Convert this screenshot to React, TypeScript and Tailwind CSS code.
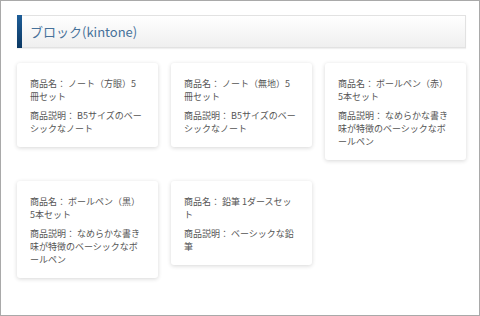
import React from 'react';

interface Product {
  name: string;
  description: string;
}

const PRODUCTS: Product[] = [
  { name: 'ノート（方眼）5冊セット', description: 'B5サイズのベーシックなノート' },
  { name: 'ノート（無地）5冊セット', description: 'B5サイズのベーシックなノート' },
  { name: 'ボールペン（赤）5本セット', description: 'なめらかな書き味が特徴のベーシックなボールペン' },
  { name: 'ボールペン（黒）5本セット', description: 'なめらかな書き味が特徴のベーシックなボールペン' },
  { name: '鉛筆 1ダースセット', description: 'ベーシックな鉛筆' },
];

const FONT = "font-['Noto_Sans_CJK_JP',sans-serif]";

function ProductCard({ product }: { product: Product }) {
  return (
    <div className="w-[141px] bg-white rounded-[3px] shadow-[0_1px_4px_rgba(0,0,0,0.16)] pt-[14px] pb-[12px] px-[13px] text-[9px] leading-[13px] text-[#555]">
      <p>商品名： {product.name}</p>
      <p className="mt-[6px]">商品説明： {product.description}</p>
    </div>
  );
}

export default function App() {
  return (
    <div className={`w-[480px] h-[316px] bg-white border border-[#a9a9a9] pl-[16px] pr-[13px] pt-[14px] ${FONT}`}>
      {/* ブロック見出し */}
      <div className="flex h-[33px] border border-[#e2e2e2] bg-gradient-to-b from-white to-[#efefef] shadow-[0_1px_1px_rgba(0,0,0,0.06)]">
        <div className="w-[5px] -my-px -ml-px bg-gradient-to-b from-[#1e5e98] to-[#0b3863]" />
        <h2 className="flex items-center pl-[8px] text-[13px] text-[#46719a]">ブロック(kintone)</h2>
      </div>

      <div className="mt-[15px] flex flex-wrap items-start gap-x-[13px] gap-y-[21px]">
        {PRODUCTS.map((p, i) => (
          <ProductCard key={i} product={p} />
        ))}
      </div>
    </div>
  );
}
